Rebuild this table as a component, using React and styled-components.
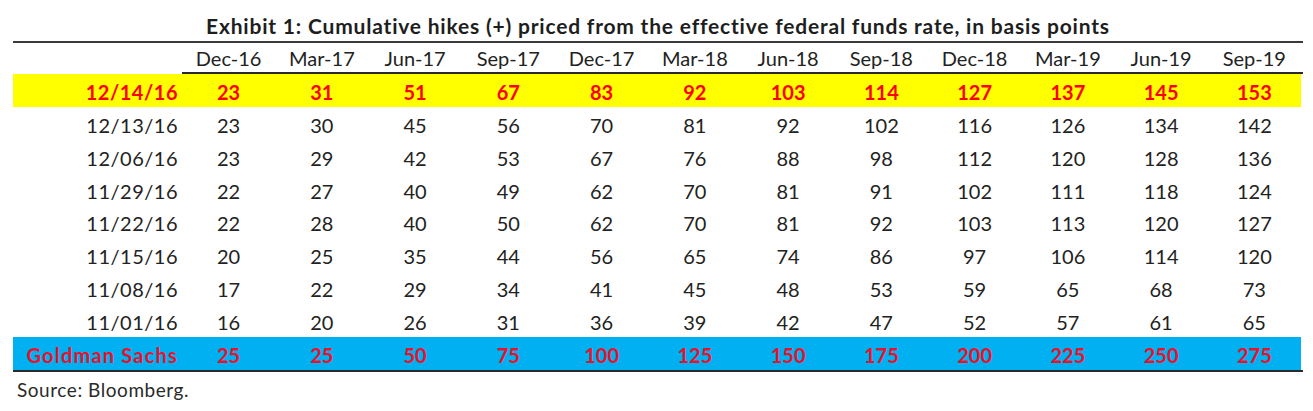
import React from "react";
import styled, { createGlobalStyle } from "styled-components";

const Global = createGlobalStyle`
  html, body { margin: 0; padding: 0; background: #ffffff; }
  body { font-family: Lato, "Open Sans", sans-serif; color: #222222; }
`;

const Page = styled.div`
  width: 1313px;
  height: 411px;
  box-sizing: border-box;
  padding: 0 12px 0 13px;
  overflow: hidden;
`;

const Title = styled.div`
  box-sizing: border-box;
  padding-top: 13px;
  padding-bottom: 3px;
  line-height: 25px;
  font-size: 21px;
  font-weight: 700;
  letter-spacing: 0.8px;
  text-align: center;
  color: #1e1e1e;
  border-bottom: 2px solid #3a3a3a;
  margin-right: -2px;
`;

const Grid = styled.div`
  display: grid;
  grid-template-columns: 169px repeat(12, 1fr);
  border-bottom: 2px solid #2a2a2a;
  margin-right: -2px;
  padding-right: 2px;
`;

const Cell = styled.div`
  box-sizing: border-box;
  height: ${(p) => p.$h || "32.85px"};
  padding-top: ${(p) => p.$pt || "6px"};
  line-height: 24px;
  font-size: 20px;
  font-weight: ${(p) => (p.$bold ? 700 : 400)};
  letter-spacing: ${(p) => p.$ls || "0"};
  text-align: ${(p) => (p.$label ? "right" : "center")};
  padding-right: ${(p) => (p.$label ? "4px" : "0")};
  white-space: nowrap;
  color: ${(p) => p.$color || "#222222"};
  background: ${(p) => p.$bg || "transparent"};
`;

const HeadCell = styled(Cell)`
  border-bottom: 2px solid ${(p) => (p.$label ? "transparent" : "#2a2a2a")};
  margin-right: ${(p) => (p.$last ? "-2px" : "0")};
  padding-right: ${(p) => (p.$last ? "2px" : "0")};
`;

const Source = styled.div`
  margin-top: 7px;
  padding-left: 4px;
  font-size: 19px;
  letter-spacing: 0.55px;
  line-height: 22px;
  color: #2a2a2a;
`;

const headers = [
  "Dec-16", "Mar-17", "Jun-17", "Sep-17", "Dec-17", "Mar-18",
  "Jun-18", "Sep-18", "Dec-18", "Mar-19", "Jun-19", "Sep-19",
];

const rows = [
  { label: "12/14/16", values: [23, 31, 51, 67, 83, 92, 103, 114, 127, 137, 145, 153], kind: "yellow" },
  { label: "12/13/16", values: [23, 30, 45, 56, 70, 81, 92, 102, 116, 126, 134, 142] },
  { label: "12/06/16", values: [23, 29, 42, 53, 67, 76, 88, 98, 112, 120, 128, 136] },
  { label: "11/29/16", values: [22, 27, 40, 49, 62, 70, 81, 91, 102, 111, 118, 124] },
  { label: "11/22/16", values: [22, 28, 40, 50, 62, 70, 81, 92, 103, 113, 120, 127] },
  { label: "11/15/16", values: [20, 25, 35, 44, 56, 65, 74, 86, 97, 106, 114, 120] },
  { label: "11/08/16", values: [17, 22, 29, 34, 41, 45, 48, 53, 59, 65, 68, 73] },
  { label: "11/01/16", values: [16, 20, 26, 31, 36, 39, 42, 47, 52, 57, 61, 65] },
  { label: "Goldman Sachs", values: [25, 25, 50, 75, 100, 125, 150, 175, 200, 225, 250, 275], kind: "blue" },
];

const styles = {
  yellow: { bg: "#ffff00", color: "#ff0000", bold: true },
  blue: { bg: "#00b0f0", color: "#e8122d", bold: true, labelLs: "1.2px" },
};

export default function App() {
  return (
    <>
      <Global />
      <Page>
        <Title>
          Exhibit 1: Cumulative hikes (+) priced from the effective federal funds rate, in basis points
        </Title>
        <Grid>
          <HeadCell $label $h="31px" $pt="3px" />
          {headers.map((h, i) => (
            <HeadCell key={h} $h="31px" $pt="3px" $last={i === headers.length - 1}>
              {h}
            </HeadCell>
          ))}
          {rows.map((r) => {
            const s = styles[r.kind] || {};
            return (
              <React.Fragment key={r.label}>
                <Cell $label $bg={s.bg} $color={s.color} $bold={s.bold} $ls={s.labelLs || "0.5px"}>
                  {r.label}
                </Cell>
                {r.values.map((v, i) => (
                  <Cell key={i} $bg={s.bg} $color={s.color} $bold={s.bold}>
                    {v}
                  </Cell>
                ))}
              </React.Fragment>
            );
          })}
        </Grid>
        <Source>Source: Bloomberg.</Source>
      </Page>
    </>
  );
}
